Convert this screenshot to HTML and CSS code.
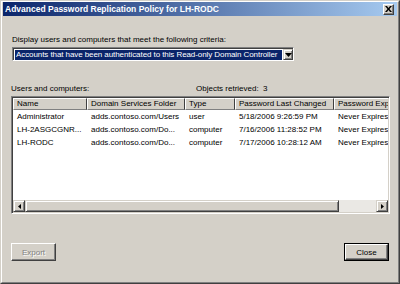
FILE: index.html
```html
<!DOCTYPE html>
<html>
<head>
<meta charset="utf-8">
<link rel="stylesheet" href="styles.css">
</head>
<body>
<div class="window">
  <div class="frame">
    <div class="titlebar">
      <span class="title">Advanced Password Replication Policy for LH-RODC</span>
      <span class="xbtn"><svg width="7" height="6" viewBox="0 0 7 6"><path d="M0 0h2l1.5 2L5 0h2L4.5 3 7 6H5L3.5 4 2 6H0l2.5-3z" fill="#000"/></svg></span>
    </div>
    <div class="content">
      <div class="label crit">Display users and computers that meet the following criteria:</div>
      <div class="combo">
        <div class="combo-sel">Accounts that have been authenticated to this Read-only Domain Controller</div>
        <div class="combo-btn"><svg width="7" height="4" viewBox="0 0 7 4"><path d="M0 0h7L3.5 4z" fill="#000"/></svg></div>
      </div>
      <div class="label row-info">
        <span class="users">Users and computers:</span>
        <span class="objects">Objects retrieved:</span>
        <span class="count">3</span>
      </div>
      <div class="list">
        <div class="grid">
          <div class="hdr"><div>Name</div><div>Domain Services Folder</div><div>Type</div><div>Password Last Changed</div><div>Password Exp</div></div>
          <div class="row"><div>Administrator</div><div>adds.contoso.com/Users</div><div>user</div><div>5/18/2006 9:26:59 PM</div><div>Never Expires</div></div>
          <div class="row"><div>LH-2ASGCGNR...</div><div>adds.contoso.com/Do...</div><div>computer</div><div>7/16/2006 11:28:52 PM</div><div>Never Expires</div></div>
          <div class="row"><div>LH-RODC</div><div>adds.contoso.com/Do...</div><div>computer</div><div>7/17/2006 10:28:12 AM</div><div>Never Expires</div></div>
        </div>
        <div class="hscroll">
          <div class="sbtn"><svg width="3" height="5" viewBox="0 0 3 5"><path d="M3 0v5L0 2.5z" fill="#000"/></svg></div>
          <div class="thumb"></div>
          <div class="track"></div>
          <div class="sbtn"><svg width="3" height="5" viewBox="0 0 3 5"><path d="M0 0v5l3-2.5z" fill="#000"/></svg></div>
        </div>
      </div>
      <div class="buttons">
        <div class="btn disabled">Export</div>
        <div class="btn default"><div class="inner">Close</div></div>
      </div>
    </div>
  </div>
</div>
</body>
</html>
```

FILE: styles.css
```css
* { box-sizing: border-box; }
html, body { margin: 0; padding: 0; }
body {
  width: 400px;
  height: 284px;
  overflow: hidden;
  font-family: "Liberation Sans", Arial, sans-serif;
  font-size: 8px;
  color: #000;
}
.window {
  width: 400px;
  height: 284px;
  border: 1px solid;
  border-color: #d4d0c8 #404040 #404040 #d4d0c8;
  background: #d4d0c8;
}
.frame {
  height: 100%;
  border: 1px solid;
  border-color: #fff #808080 #808080 #fff;
  padding: 0 1px;
  display: flex;
  flex-direction: column;
}
.titlebar {
  height: 14px;
  background: linear-gradient(to right, #0a246a, #a6caf0);
  display: flex;
  align-items: center;
  justify-content: space-between;
  padding: 0 3px 0 2px;
}
.title {
  color: #fff;
  font-weight: bold;
  font-size: 8.5px;
  white-space: nowrap;
}
.xbtn {
  width: 11px;
  height: 11px;
  background: #d4d0c8;
  border: 1px solid;
  border-color: #fff #404040 #404040 #fff;
  box-shadow: inset -1px -1px 0 #808080;
  display: flex;
  align-items: center;
  justify-content: center;
}
.xbtn svg { display: block; }
.content {
  padding: 0 7px 0 8px;
  display: flex;
  flex-direction: column;
}
.label {
  height: 10px;
  line-height: 10px;
  white-space: nowrap;
}
.crit { margin-top: 19px; padding-left: 1px; }
.combo {
  margin-top: 2px;
  margin-left: 1px;
  width: 282px;
  height: 14px;
  border: 1px solid;
  border-color: #808080 #fff #fff #808080;
  box-shadow: inset 1px 1px 0 #404040;
  background: #fff;
  display: flex;
  padding: 1px 0 0 1px;
}
.combo-sel {
  flex: 1;
  margin: 1px;
  background: #0a246a;
  color: #fff;
  height: 10px;
  line-height: 10px;
  padding-left: 1px;
  letter-spacing: -0.08px;
  white-space: nowrap;
  overflow: hidden;
}
.combo-btn {
  width: 10px;
  height: 11px;
  background: #d4d0c8;
  border: 1px solid;
  border-color: #d4d0c8 #404040 #404040 #d4d0c8;
  box-shadow: inset 1px 1px 0 #fff, inset -1px -1px 0 #808080;
  display: flex;
  align-items: center;
  justify-content: center;
}
.combo-btn svg { display: block; }
.row-info {
  margin-top: 23px;
  display: flex;
}
.users { width: 185px; }
.objects { width: 67px; }
.list {
  margin-top: 2px;
  width: 379px;
  height: 118px;
  border: 1px solid;
  border-color: #808080 #fff #fff #808080;
  box-shadow: inset 1px 1px 0 #404040, inset -1px -1px 0 #d4d0c8;
  padding: 1px;
  display: flex;
  flex-direction: column;
  background: #fff;
}
.grid {
  flex: 1;
  overflow: hidden;
  background: #fff;
}
.hdr, .row {
  display: grid;
  grid-template-columns: 74px 98px 50px 99px 60px;
  white-space: nowrap;
}
.hdr > div, .row > div {
  overflow: hidden;
  padding-left: 4px;
}
.hdr > div {
  height: 12px;
  line-height: 10px;
  background: #d4d0c8;
  border: 1px solid;
  border-color: #fff #404040 #808080 #fff;
  padding-left: 3px;
}
.row > div {
  height: 13px;
  line-height: 13px;
}
.hscroll {
  height: 12px;
  display: flex;
  background: #d4d0c8;
}
.sbtn {
  width: 12px;
  height: 12px;
  background: #d4d0c8;
  border: 1px solid;
  border-color: #d4d0c8 #404040 #404040 #d4d0c8;
  box-shadow: inset 1px 1px 0 #fff, inset -1px -1px 0 #808080;
  display: flex;
  align-items: center;
  justify-content: center;
}
.sbtn svg { display: block; }
.thumb {
  width: 314px;
  height: 12px;
  background: #d4d0c8;
  border: 1px solid;
  border-color: #d4d0c8 #404040 #404040 #d4d0c8;
  box-shadow: inset 1px 1px 0 #fff, inset -1px -1px 0 #808080;
}
.track {
  flex: 1;
  background: #eae8e4;
}
.buttons {
  margin-top: 29px;
  display: flex;
  justify-content: space-between;
  width: 378px;
}
.btn {
  width: 45px;
  height: 18px;
  background: #d4d0c8;
  border: 1px solid;
  border-color: #fff #404040 #404040 #fff;
  box-shadow: inset -1px -1px 0 #808080;
  display: flex;
  align-items: center;
  justify-content: center;
}
.disabled {
  color: #808080;
  text-shadow: 1px 1px 0 #fff;
}
.default {
  border: 1px solid #000;
  box-shadow: none;
}
.default .inner {
  width: 100%;
  height: 100%;
  border: 1px solid;
  border-color: #fff #404040 #404040 #fff;
  box-shadow: inset -1px -1px 0 #808080;
  display: flex;
  align-items: center;
  justify-content: center;
}
```
